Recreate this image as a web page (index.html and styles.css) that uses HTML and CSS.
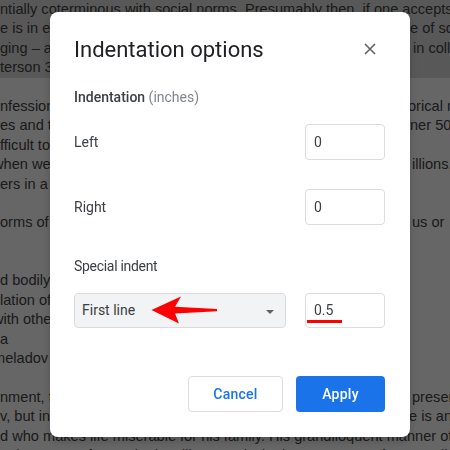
FILE: index.html
```html
<!DOCTYPE html>
<html lang="en">
<head>
<meta charset="utf-8">
<title>Indentation options</title>
<link rel="stylesheet" href="styles.css">
</head>
<body>
<div class="doc">
  <div class="hl">
    <div class="ln">ntially coterminous with social norms. Presumably then, if one accepts</div>
    <div class="ln"><span class="l">e is in effect the moral order that a culture has agreed upon, the rul</span><span class="r">e of society</span></div>
    <div class="ln"><span class="l">ging – a matter that is settled by custom rather than reason, and thus</span><span class="r p3">in collective</span></div>
    <div class="ln"><span class="l">terson 33). Such a view leaves little room for the individual.</span></div>
  </div>
  <div class="ln"></div>
  <div class="ln"><span class="l">nfession, in this sense, is a return to the community and to its hist</span><span class="r m2">orical meaning</span></div>
  <div class="ln"><span class="l">es and the way they are lived by people who, in a city of rather</span><span class="r">ner 50 thousand</span></div>
  <div class="ln"><span class="l">fficult to imagine a life lived apart from the judgement of others.</span></div>
  <div class="ln"><span class="l cut">when we consider the lives of those who suffer, in their m</span><span class="r p2">illions, the</span></div>
  <div class="ln"><span class="l">ers in a world that has no place for them.</span></div>
  <div class="ln"></div>
  <div class="ln"><span class="l">orms of conduct are never simply given, whether they are religio</span><span class="r p2">us or</span></div>
  <div class="ln"></div>
  <div class="ln"></div>
  <div class="ln"><span class="l">d bodily</span></div>
  <div class="ln"><span class="l">lation of</span></div>
  <div class="ln"><span class="l cut">with others</span></div>
  <div class="ln"><span class="l">a</span></div>
  <div class="ln"><span class="l cut">meladov</span></div>
  <div class="ln"></div>
  <div class="ln"><span class="l">nment, though he is not entirely unsympathetic, is the one who presen</span><span class="r p2">presents</span></div>
  <div class="ln"><span class="l">v, but in practice he is a drunkard; his nature is such that he is an</span><span class="r m1">e is an</span></div>
  <div class="ln">d who makes life miserable for his family. His grandiloquent manner of</div>
  <div class="ln">n the sense of one who is military, and who has no sense of responsibility</div>
</div>
<div class="scrim"></div>
<div class="dialog" role="dialog" aria-label="Indentation options">
  <div class="head">
    <h1 class="title">Indentation options</h1>
    <button class="close" aria-label="Close">
      <svg width="12" height="12" viewBox="0 0 12 12"><path d="M1 1L11 11M11 1L1 11" stroke="#5f6368" stroke-width="1.6" fill="none"/></svg>
    </button>
  </div>
  <div class="section s1">Indentation <span class="unit">(inches)</span></div>
  <div class="row r1"><span class="lbl">Left</span><div class="field">0</div></div>
  <div class="row r2"><span class="lbl">Right</span><div class="field">0</div></div>
  <div class="section s2">Special indent</div>
  <div class="row r3">
    <div class="select">First line<span class="caret"></span></div>
    <div class="field mark">0.5<span class="uline"></span></div>
    <svg class="arrow" width="70" height="32" viewBox="0 0 70 32"><polygon points="1.5,16 31,2.5 25,12.8 67,15 67,17.2 25,19.4 29,29.5" fill="#ff0000"/></svg>
  </div>
  <div class="actions">
    <button class="btn cancel">Cancel</button>
    <button class="btn apply">Apply</button>
  </div>
</div>
</body>
</html>
```

FILE: styles.css
```css
html, body {
  margin: 0;
  padding: 0;
  width: 450px;
  height: 450px;
  overflow: hidden;
  background: #ffffff;
}

.doc {
  font-family: "Liberation Sans", Arial, sans-serif;
  font-size: 14.6px;
  line-height: 19.4px;
  color: #444444;
}

.hl {
  background: #dcdcdc;
}

.ln {
  display: flex;
  height: 19.4px;
  white-space: nowrap;
  overflow: hidden;
}

.l {
  flex: 0 0 410px;
  overflow: hidden;
}

.cut {
  text-indent: -7px;
}

.r {
  flex: none;
}

.p2 { padding-left: 2px; }
.p3 { padding-left: 3px; }
.m1 { margin-left: -1px; }
.m2 { margin-left: -2px; }

.scrim {
  position: fixed;
  inset: 0;
  background: rgba(0, 0, 0, 0.6);
}

.dialog {
  position: fixed;
  left: 50px;
  top: 12px;
  width: 360px;
  height: 425px;
  box-sizing: border-box;
  padding: 24px 25px 24px 24px;
  background: #ffffff;
  border-radius: 8px;
  box-shadow: 0 4px 8px rgba(0, 0, 0, 0.2);
  font-family: Roboto, "Liberation Sans", sans-serif;
  color: #3c4043;
  display: flex;
  flex-direction: column;
}

.head {
  display: flex;
  justify-content: space-between;
  align-items: center;
  height: 28px;
}

.title {
  margin: 0;
  font-family: Roboto, sans-serif;
  font-weight: 400;
  font-size: 22px;
  line-height: 28px;
  color: #202124;
}

.close {
  width: 24px;
  height: 24px;
  margin-right: 3px;
  margin-top: -2px;
  padding: 0;
  border: none;
  background: transparent;
  display: flex;
  align-items: center;
  justify-content: center;
}

.section {
  font-size: 14px;
  line-height: 20px;
  height: 20px;
  color: #3c4043;
}

.s1 {
  margin-top: 23px;
  font-weight: 500;
}

.unit {
  font-weight: 400;
  color: #80868b;
}

.s2 {
  margin-top: 31px;
  font-weight: 400;
  letter-spacing: -0.3px;
}

.row {
  display: flex;
  justify-content: space-between;
  align-items: center;
  height: 36px;
  position: relative;
}

.r1 { margin-top: 17px; }
.r2 { margin-top: 29px; }
.r3 { margin-top: 17px; height: 35px; }

.lbl {
  font-size: 14px;
  color: #3c4043;
}

.field {
  width: 80px;
  height: 36px;
  box-sizing: border-box;
  border: 1px solid #dadce0;
  border-radius: 4px;
  padding-left: 8px;
  font-size: 14px;
  line-height: 34px;
  color: #3c4043;
  position: relative;
}

.r3 .field {
  height: 35px;
  line-height: 33px;
}

.uline {
  position: absolute;
  left: 1px;
  top: 26px;
  width: 35px;
  height: 3px;
  background: #ff0000;
}

.select {
  width: 212px;
  height: 35px;
  box-sizing: border-box;
  border: 1px solid #dadce0;
  border-radius: 4px;
  background: #f1f3f4;
  padding: 0 11px 0 7px;
  font-size: 14px;
  line-height: 33px;
  color: #3c4043;
  display: flex;
  justify-content: space-between;
  align-items: center;
}

.caret {
  width: 0;
  height: 0;
  border-left: 4px solid transparent;
  border-right: 4px solid transparent;
  border-top: 4px solid #5f6368;
  margin-top: 2px;
}

.arrow {
  position: absolute;
  left: 76px;
  top: 1px;
}

.actions {
  display: flex;
  justify-content: flex-end;
  gap: 13px;
  margin-top: 48px;
}

.btn {
  height: 36px;
  box-sizing: border-box;
  border-radius: 4px;
  font-family: Roboto, sans-serif;
  font-size: 14px;
  font-weight: 500;
  letter-spacing: 0.25px;
  padding: 0;
}

.cancel {
  width: 95px;
  border: 1px solid #dadce0;
  background: #ffffff;
  color: #1a73e8;
}

.apply {
  width: 89px;
  border: none;
  background: #1a73e8;
  color: #ffffff;
}
```
